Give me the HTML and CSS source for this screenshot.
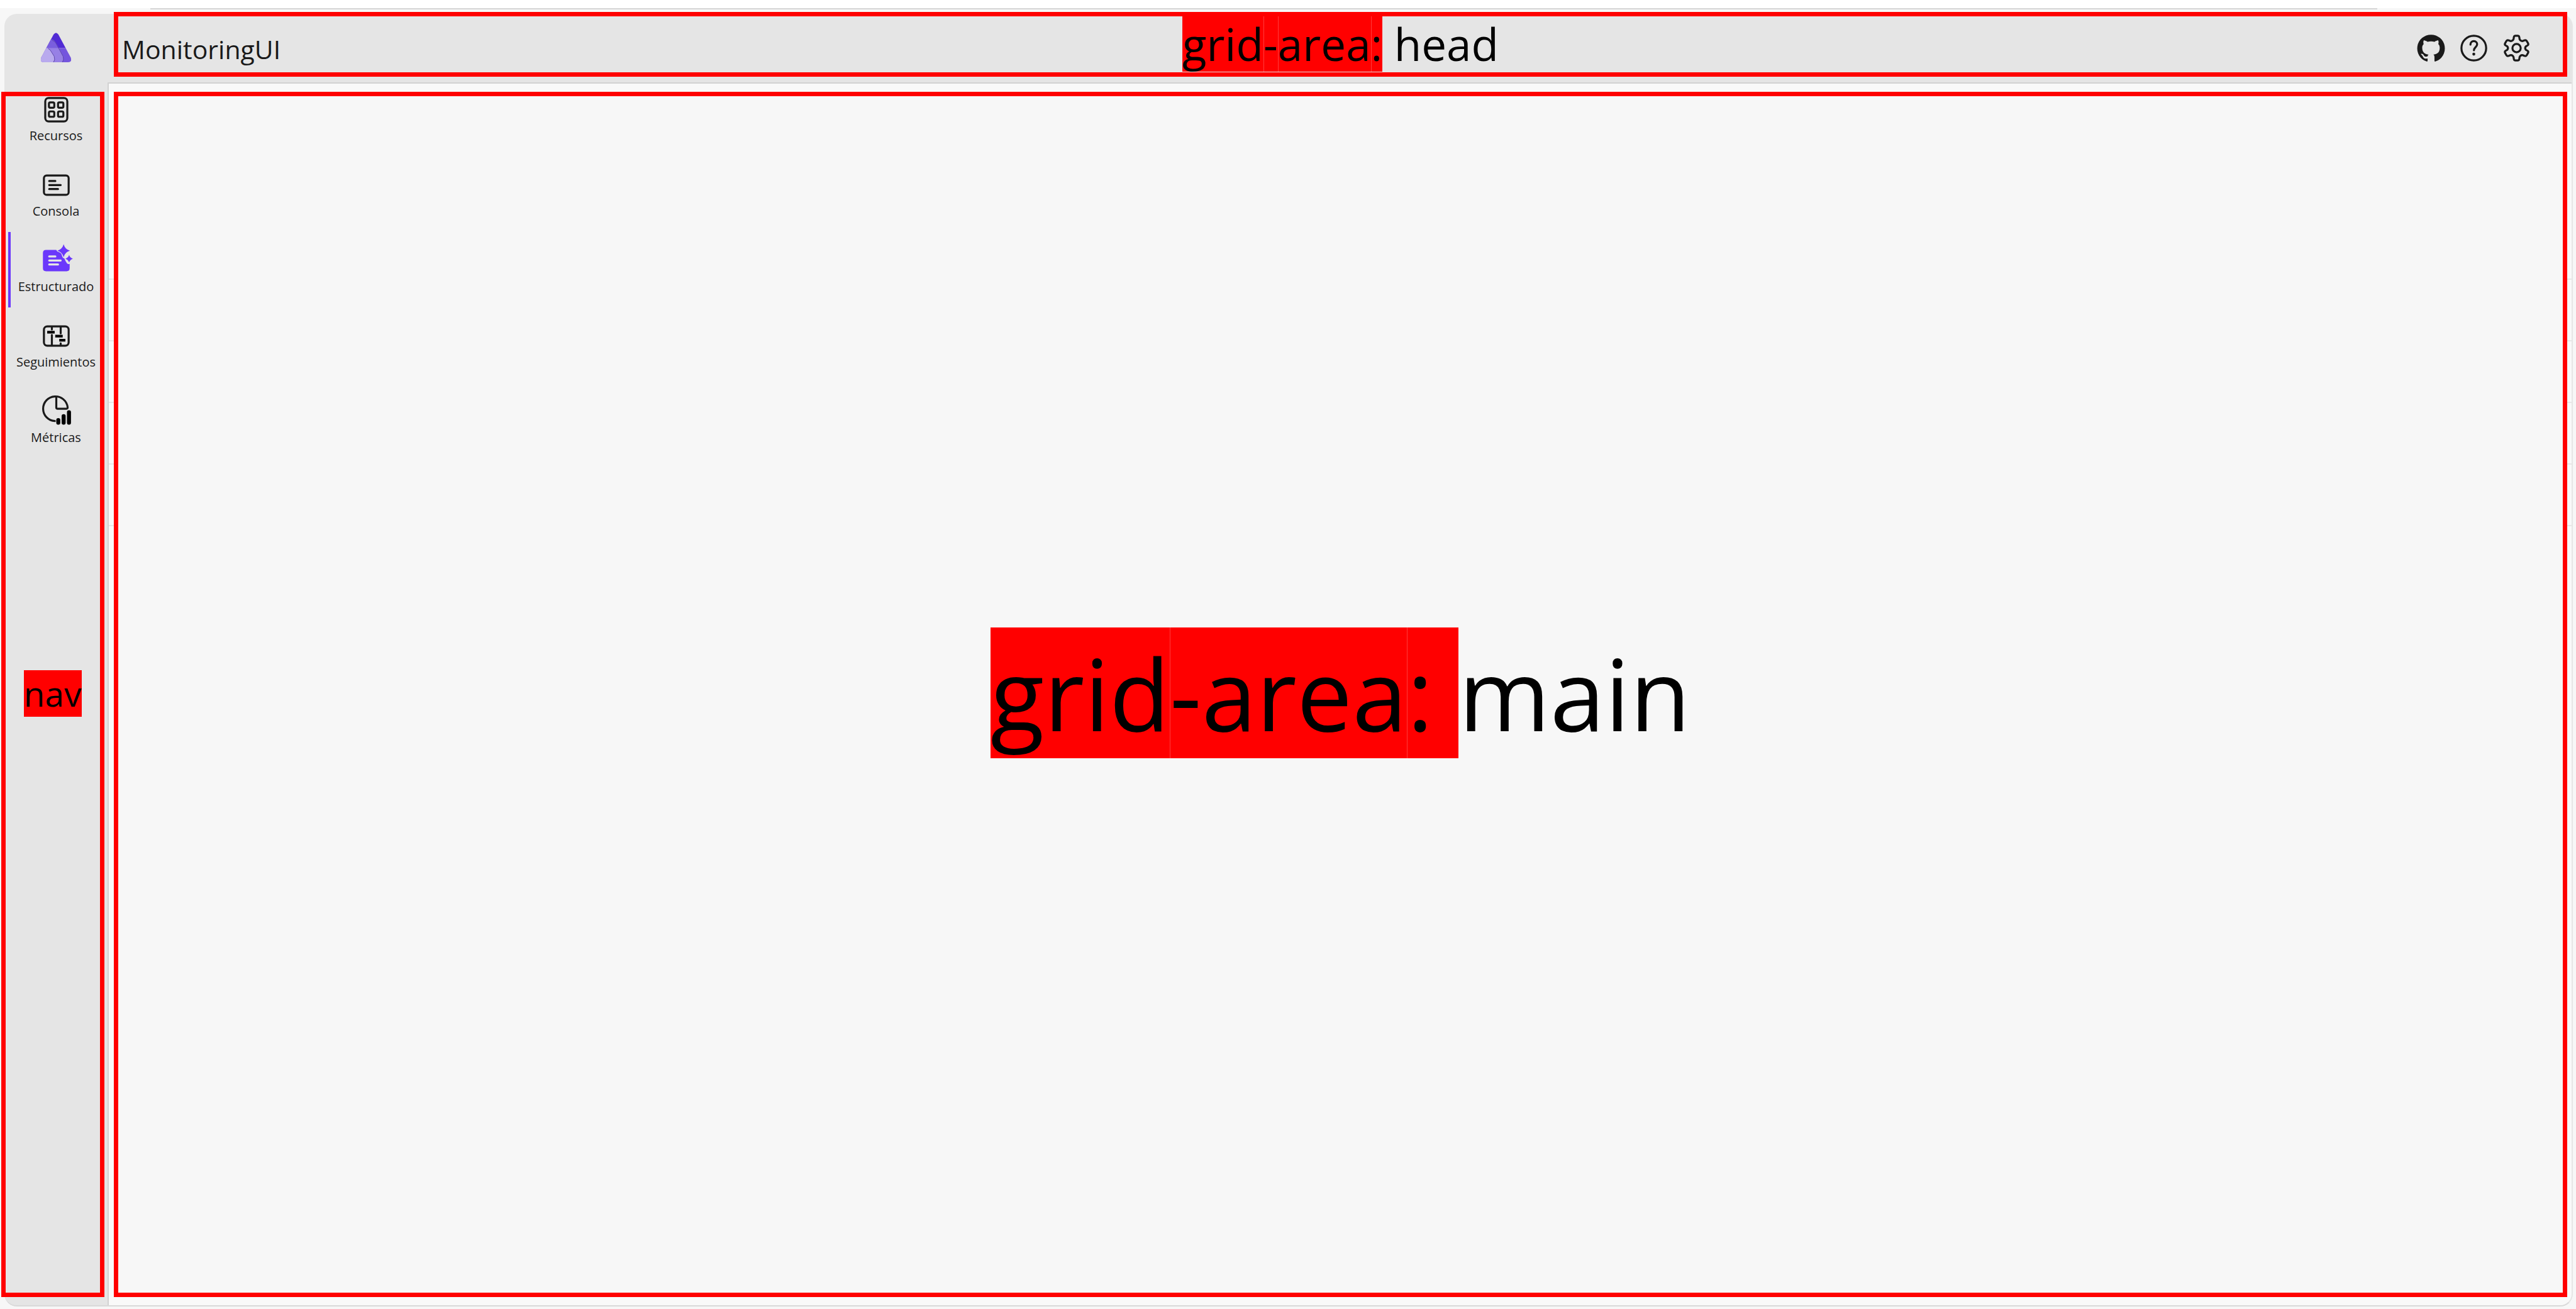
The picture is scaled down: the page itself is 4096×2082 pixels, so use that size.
FILE: index.html
```html
<!DOCTYPE html>
<html lang="es">
<head>
<meta charset="utf-8">
<title>MonitoringUI</title>
<link rel="stylesheet" href="styles.css">
</head>
<body>
<div class="window-edge"><div class="window-line"></div></div>
<div class="app">
  <a class="logo" href="#" aria-label="Inicio">
    <svg viewBox="0 0 52 50">
      <defs><clipPath id="tri"><path d="M22 3Q26-2.500 30 3L51 42Q54 50 46 50H6Q-2 50 1 42Z"/></clipPath></defs>
      <g clip-path="url(#tri)">
        <path fill="#512bd4" d="M0 0h52v26H0z"/>
        <path fill="#7455dd" d="M0 26h52v24H0z"/>
        <path fill="#7a5ede" d="M14 12Q22 10 25 16L31 26H8z"/>
        <path fill="#9780e5" d="M8 26H31L38 40Q40 46 36 50H0z"/>
        <path fill="#b9aaee" d="M8 26Q14 25 17 30L23 40Q25 46 21 50H0V26z"/>
        <path fill="none" stroke="#5b45a8" stroke-width="1" d="M20 13Q24 14 26 18L38 40Q40 46 37 50M13 27Q16 28 18 32L23 40Q25 46 22 50"/>
      </g>
    </svg>
  </a>
  <header class="head">
    <h1 class="title">MonitoringUI</h1>
    <p class="area area-head"><span class="mark"><span>grid</span><span>-</span><span>area</span><span>:</span></span> head</p>
    <div class="tools">
      <button type="button" aria-label="GitHub"><svg viewBox="-2 -2 28 28"><path class="solid" d="M12 .3a12 12 0 0 0-3.800 23.400c.6.1.8-.3.8-.6v-2c-3.300.7-4-1.600-4-1.600-.6-1.400-1.400-1.800-1.400-1.800-1-.7.1-.7.1-.7 1.200 0 1.900 1.200 1.900 1.200 1 1.800 2.800 1.300 3.500 1 0-.8.4-1.300.7-1.600-2.700-.3-5.500-1.300-5.500-6 0-1.200.5-2.300 1.300-3.100-.2-.4-.6-1.600 0-3.200 0 0 1-.3 3.400 1.200a11.500 11.500 0 0 1 6 0c2.300-1.500 3.300-1.200 3.300-1.200.6 1.600.2 2.800 0 3.200.9.8 1.300 1.900 1.300 3.200 0 4.600-2.800 5.600-5.500 5.900.5.4.9 1 .9 2.200v3.300c0 .3.1.7.8.6A12 12 0 0 0 12 .3"/></svg></button>
      <button type="button" aria-label="Ayuda"><svg viewBox="0 0 24 24"><circle cx="12" cy="12" r="9.250"/><path d="M9.500 9.400c0-1.700 1.100-2.600 2.500-2.600s2.500 1 2.500 2.400c0 2-2.400 2.200-2.400 4.400"/><circle class="solid" cx="12" cy="16.500" r="1.100"/></svg></button>
      <button type="button" aria-label="Configuración"><svg viewBox="0 0 24 24"><circle cx="12" cy="12" r="3.100"/><path d="M9.720 5.380 9.930 4Q10.100 2.800 11.200 2.800h1.600Q13.900 2.800 14.070 4l.21 1.380Q15 6.900 16.590 6.720l1.200-.5Q19 5.800 19.600 6.700l1 1.700Q21.100 9.400 20.200 10l-1.330.8Q18 12 18.870 13.200l1.330.8Q21.100 14.600 20.600 15.600l-1 1.700Q19 18.200 17.790 17.780l-1.200-.5Q15 17.100 14.280 18.620L14.070 20Q13.900 21.200 12.800 21.200h-1.600Q10.100 21.200 9.930 20l-.21-1.380Q9 17.100 7.410 17.280l-1.200.5Q5 18.200 4.400 17.300l-1-1.700Q2.900 14.600 3.800 14l1.330-.8Q6 12 5.130 10.800L3.800 10Q2.900 9.400 3.400 8.400l1-1.700Q5 5.800 6.210 6.220l1.200.5Q9 6.900 9.720 5.380Z"/></svg></button>
    </div>
  </header>
  <nav class="nav">
    <ul class="menu">
      <li><a href="#"><svg viewBox="0 0 24 24"><rect x="3.750" y="3.250" width="16.500" height="17.500" rx="2.500"/><rect x="6.500" y="6.500" width="4" height="4" rx="1"/><rect x="13.300" y="6.500" width="4" height="4" rx="1"/><rect x="6.500" y="13.300" width="4" height="4" rx="1"/><rect x="13.300" y="13.300" width="4" height="4" rx="1"/></svg>Recursos</a></li>
      <li><a href="#"><svg viewBox="0 0 24 24"><rect x="2.750" y="4.750" width="18.500" height="14.500" rx="2"/><path d="M6.700 8.900h4.600M6.700 11.900h8.600M6.700 14.900h6.600"/></svg>Consola</a></li>
      <li><a class="active" href="#" aria-current="page"><svg viewBox="0 0 24 24"><path class="solid" d="M4.300 4H12Q12.300 5.200 14 5.700 16 6.500 16.300 8.500 16.800 10.300 18 10.200 18.800 12.500 20 14 21 15 22 14.300V17.700Q22 20 19.700 20H4.300Q2 20 2 17.700V6.300Q2 4 4.300 4ZM17.500-.2Q18.500 3.600 22.200 4.600 18.500 5.600 17.500 9.400 16.500 5.600 12.800 4.600 16.500 3.600 17.500-.2ZM21.600 7.800Q22.300 9.900 24.400 10.600 22.300 11.300 21.600 13.400 20.900 11.300 18.800 10.600 20.900 9.900 21.600 7.800Z"/><path class="cut" d="M6.700 8.900h4.600M6.700 11.900h8.600M6.700 14.900h6.600"/></svg>Estructurado</a></li>
      <li><a href="#"><svg viewBox="0 0 24 24"><rect x="2.750" y="4.750" width="18.500" height="14.500" rx="2.500"/><path d="M8.700 5v2M8.700 11.200V19M15.300 5v5M15.300 17.500V19"/><path class="bold" d="M5.200 9.100h5.600M11.200 12.100h5.600M14.200 15.100h4.600"/></svg>Seguimientos</a></li>
      <li><a href="#"><svg viewBox="0 0 24 24"><path d="M10.900 19.100A9.200 9.200 0 1 1 20.500 8.900Q20.600 9.900 19.600 9.900H13Q12 9.900 12 8.900V1.800"/><path class="bars" d="M13.500 18.400v2M17.500 15.500v4.900M21.500 12.500v7.900"/></svg>Métricas</a></li>
    </ul>
    <span class="nav-tag">nav</span>
  </nav>
  <div class="content">
    <main class="main">
      <p class="area area-main"><span class="mark"><span>grid</span><span>-area</span><span>: </span></span>main</p>
    </main>
  </div>
</div>
</body>
</html>
```
FILE: styles.css
```css
* { box-sizing: border-box; margin: 0; padding: 0; }

body {
  display: flex;
  flex-direction: column;
  min-height: 100vh;
  background: #f7f7f7;
  color: #000;
  font-family: "Open Sans", "Noto Sans", sans-serif;
}

svg {
  display: block;
  width: 51px;
  height: 51px;
  overflow: visible;
  fill: none;
  stroke: #1a1a1a;
  stroke-width: 1.5;
  stroke-linecap: round;
  stroke-linejoin: round;
}
.solid { fill: #1a1a1a; stroke: none; }

.window-edge {
  padding-top: 13px;
  background: linear-gradient(#fff 13px, #f7f7f7 13px);
}
.window-line {
  height: 2px;
  margin: 0 316px 0 239px;
  background: #d5d5d5;
}

.app {
  flex: 1;
  display: grid;
  grid-template-columns: 164px 1fr;
  grid-template-rows: 109px 1fr;
  grid-template-areas: "logo head" "nav main";
  margin: 7px 5px 4px 7px;
  border-right: 2px solid #e6e6e6;
  border-bottom: 2px solid #d9d9d9;
  border-radius: 20px;
  background: #e5e5e5;
}

.logo { grid-area: logo; justify-self: center; padding-top: 30px; }
.logo svg { width: 52px; height: 47px; stroke: none; }

.head {
  grid-area: head;
  display: grid;
  grid-template-columns: 1fr auto 1fr;
  height: 103px;
  margin: -3px 7px 9px 10px;
  border: 7px solid #f00;
}
.title {
  align-self: center;
  padding: 14px 0 0 6px;
  color: #1a1a1a;
  font-size: 41px;
  font-weight: 400;
  line-height: 54px;
}
.tools {
  display: flex;
  justify-content: flex-end;
  align-items: center;
  gap: 17px;
  padding: 12px 48px 0 0;
}
.tools button { border: 0; background: none; }

.area { white-space: pre; }
.mark { display: inline-block; background: #f00; }
.mark span { display: inline-block; }
.mark span + span { box-shadow: inset 1px 0 #ff3c3c; }
.area-head { font-size: 71px; line-height: 88px; }
.area-main { padding-bottom: 6px; font-size: 157px; line-height: 208px; }

.nav {
  grid-area: nav;
  display: grid;
  margin: 15px 5px 13px -5px;
  border: 7px solid #f00;
}
.menu, .nav-tag { grid-area: 1 / 1; }
.menu { margin: -24px -6px 0 4px; list-style: none; }
.menu a {
  display: flex;
  flex-direction: column;
  align-items: center;
  gap: 2px;
  height: 120px;
  padding-top: 20px;
  color: #1a1a1a;
  font-size: 20px;
  line-height: 28px;
  text-decoration: none;
}
.menu .active { box-shadow: inset 4px 0 #6b38fb; }
.active .solid { fill: #6b38fb; }
.menu .cut { stroke: #e5e5e5; }
.bold { stroke: #000; stroke-width: 2; stroke-linecap: butt; }
.bars { stroke: #000; stroke-width: 3; }
.nav-tag {
  place-self: center;
  margin-bottom: 4px;
  background: #f00;
  font-size: 55px;
  line-height: 74px;
}

.content {
  grid-area: main;
  display: flex;
  padding: 13px 7px 13px 8px;
  border-top: 2px solid #d2d2d2;
  border-left: 2px solid #d2d2d2;
  border-bottom-right-radius: 18px;
  background: repeating-linear-gradient(#e8e8e8 0 2px, transparent 2px 98px) 0 310px / 100% 394px no-repeat #f9f9f9;
}
.main {
  flex: 1;
  display: grid;
  place-items: center;
  border: 7px solid #f00;
  background: #f7f7f7;
}
```
